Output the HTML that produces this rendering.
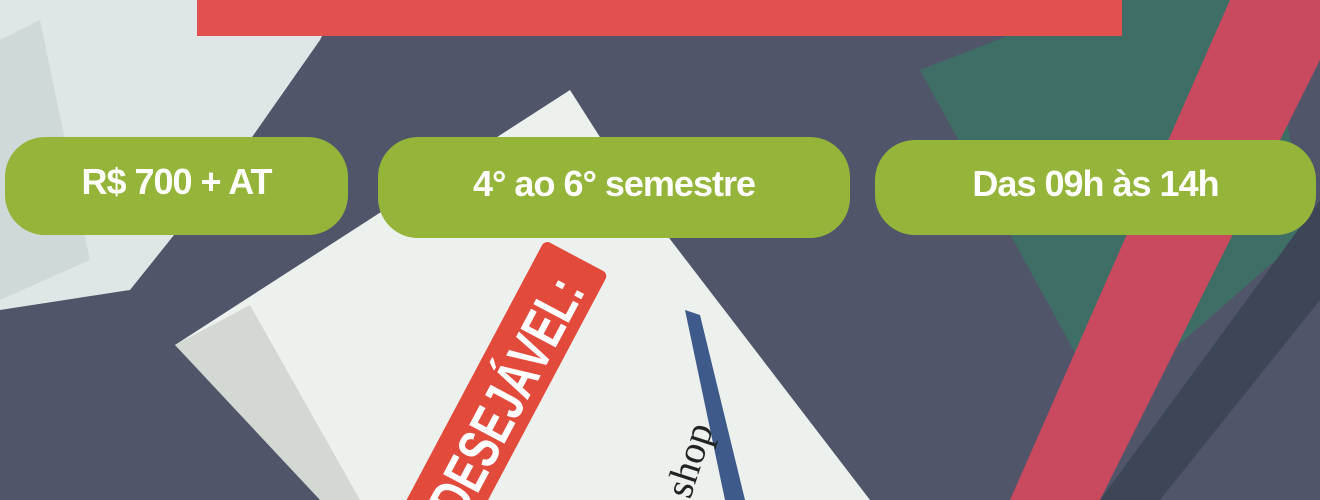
<!DOCTYPE html>
<html><head><meta charset="utf-8"><style>
html,body{margin:0;padding:0;width:1320px;height:500px;overflow:hidden;background:#50556a;font-family:"Liberation Sans",sans-serif}
.pill{position:absolute;background:#95b43a;border-radius:40px;color:#fff;font-weight:bold;font-size:36px;display:flex;align-items:center;justify-content:center;letter-spacing:-1px;padding-bottom:8px;box-sizing:border-box}
</style></head><body>
<svg width="1320" height="500" style="position:absolute;left:0;top:0;overflow:hidden">
<polygon points="0,0 340,0 320,40 250,140 130,290 0,310" fill="#dfe7e6"/>
<polygon points="0,40 40,20 90,260 0,300" fill="#cfd9da"/>
<polygon points="920,70 1100,0 1260,0 1310,230 1150,370 1090,380" fill="#3f6e66"/>
<polygon points="1230,0 1320,0 1320,60 1100,500 1010,500" fill="#c94a5f"/>
<polygon points="1320,200 1320,300 1160,500 1100,500" fill="#3d4656"/>
<polygon points="175,345 570,90 640,200 870,500 330,500" fill="#edf1ee"/>
<polygon points="175,345 250,305 360,500 320,500" fill="#d4d8d3"/>
<polygon points="685,310 700,315 745,500 725,500" fill="#3e5a8a"/>
<rect x="197" y="0" width="925" height="36" fill="#e35050"/>
<g transform="translate(505,400) rotate(-62)">
<rect x="-150" y="-40" width="310" height="72" fill="#e24a3c" rx="6"/>
<text x="5" y="20" fill="#fff" font-family="Liberation Sans" font-weight="bold" font-size="58" text-anchor="middle" transform="scale(0.72,1)">DESEJÁVEL:</text>
</g>
<text x="0" y="0" transform="translate(690,500) rotate(-72)" fill="#222" font-family="Liberation Serif" font-size="40">shop</text>
</svg>
<div class="pill" style="left:5px;top:137px;width:343px;height:98px">R$ 700 + AT</div>
<div class="pill" style="left:378px;top:137px;width:472px;height:101px">4° ao 6° semestre</div>
<div class="pill" style="left:875px;top:140px;width:441px;height:95px">Das 09h às 14h</div>
</body></html>
